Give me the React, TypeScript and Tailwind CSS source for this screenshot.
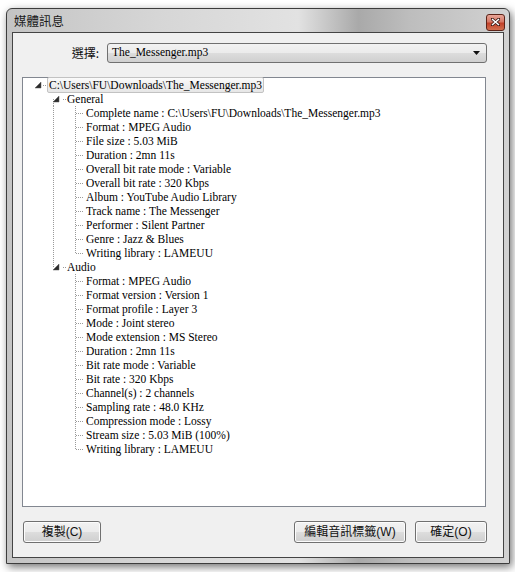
import React from 'react';

const generalItems = [
  'Complete name : C:\\Users\\FU\\Downloads\\The_Messenger.mp3',
  'Format : MPEG Audio',
  'File size : 5.03 MiB',
  'Duration : 2mn 11s',
  'Overall bit rate mode : Variable',
  'Overall bit rate : 320 Kbps',
  'Album : YouTube Audio Library',
  'Track name : The Messenger',
  'Performer : Silent Partner',
  'Genre : Jazz & Blues',
  'Writing library : LAMEUU',
];

const audioItems = [
  'Format : MPEG Audio',
  'Format version : Version 1',
  'Format profile : Layer 3',
  'Mode : Joint stereo',
  'Mode extension : MS Stereo',
  'Duration : 2mn 11s',
  'Bit rate mode : Variable',
  'Bit rate : 320 Kbps',
  'Channel(s) : 2 channels',
  'Sampling rate : 48.0 KHz',
  'Compression mode : Lossy',
  'Stream size : 5.03 MiB (100%)',
  'Writing library : LAMEUU',
];

const LINE = '#9a9a9a';

// dotted tree lines, drawn per row
const VLine = ({ x, y1, y2 }: { x: number; y1: number; y2: number }) => (
  <line x1={x + 0.5} x2={x + 0.5} y1={y1} y2={y2} stroke={LINE} strokeDasharray="1 1" shapeRendering="crispEdges" />
);
const HLine = ({ x1, x2 }: { x1: number; x2: number }) => (
  <line x1={x1} x2={x2} y1={7.5} y2={7.5} stroke={LINE} strokeDasharray="1 1" shapeRendering="crispEdges" />
);
const Expanded = ({ x }: { x: number }) => (
  <polygon points={`${x + 6},4 ${x + 6},10 ${x},10`} fill="#2b2b2b" stroke="#5a5a5a" strokeWidth="0.5" />
);

const Row = ({ width, lines, children }: { width: number; lines: React.ReactNode; children: React.ReactNode }) => (
  <div className="flex h-[14px] items-center whitespace-nowrap">
    <svg width={width} height={14} className="shrink-0">
      {lines}
    </svg>
    {children}
  </div>
);

const Leaf = ({ text, last, parentLast }: { text: string; last: boolean; parentLast: boolean }) => (
  <Row
    width={63}
    lines={
      <>
        {!parentLast && <VLine x={30} y1={0} y2={14} />}
        <VLine x={52} y1={0} y2={last ? 8 : 14} />
        <HLine x1={53} x2={61} />
      </>
    }
  >
    <span>{text}</span>
  </Row>
);

const Group = ({ title, items, last }: { title: string; items: string[]; last: boolean }) => (
  <>
    <Row
      width={44}
      lines={
        <>
          <VLine x={30} y1={last ? 0 : 7} y2={last ? 8 : 14} />
          <Expanded x={30} />
          <HLine x1={40} x2={43} />
        </>
      }
    >
      <span>{title}</span>
    </Row>
    {items.map((t, i) => (
      <Leaf key={title + i} text={t} last={i === items.length - 1} parentLast={last} />
    ))}
  </>
);

const WinButton = ({ label, className }: { label: string; className: string }) => (
  <button
    type="button"
    className={`h-[22px] rounded-[3px] border border-[#707070] bg-[linear-gradient(to_bottom,#f2f2f2_0%,#ebebeb_50%,#dddddd_50%,#cfcfcf_100%)] text-[12px] text-[#111] shadow-[inset_0_0_0_1px_#fcfcfc] ${className}`}
  >
    {label}
  </button>
);

export default function App() {
  return (
    <div className="h-[572px] w-[515px] bg-white pl-[6px] pt-[8px] font-['Liberation_Sans','Noto_Sans_CJK_TC',sans-serif]">
      <div className="flex h-[556px] w-[504px] flex-col rounded-t-[6px] border border-[#3c3c3c] bg-[linear-gradient(to_right,#c4c4c4,#d6d6d6_30%,#e2e2e2_58%,#a9a9a9_70%,#bdbdbd_80%,#d2d2d2)] px-[5px] pb-[5px] shadow-[2px_3px_8px_rgba(0,0,0,0.55)]">
        {/* title bar */}
        <div className="flex h-[23px] shrink-0 items-center justify-between">
          <span className="pl-[2px] pt-[2px] text-[12.5px] text-[#1a1a1a] font-['Noto_Sans_CJK_TC',sans-serif]">媒體訊息</span>
          <div className="mt-[3px] mr-[-1px] flex h-[17px] w-[19px] items-center justify-center rounded-[3px] border border-[#5c2318] bg-[linear-gradient(to_bottom,#e8a597_0%,#d67866_45%,#c2412a_55%,#d2704f_100%)]">
            <svg width="9" height="8" viewBox="0 0 9 8">
              <path d="M1 1 L8 7 M8 1 L1 7" stroke="#3a1a14" strokeWidth="3" strokeLinecap="square" />
              <path d="M1 1 L8 7 M8 1 L1 7" stroke="#ffffff" strokeWidth="1.6" />
            </svg>
          </div>
        </div>

        {/* client area */}
        <div className="flex flex-1 flex-col border border-[#444] bg-[#f0f0f0] pl-[9px] pr-[16px]">
          <div className="mt-[10px] flex items-center">
            <span className="w-[78px] pr-[1px] text-right text-[12px] text-[#111] font-['Noto_Sans_CJK_TC',sans-serif]">選擇:</span>
            <div className="ml-[7px] flex h-[20px] flex-1 items-center justify-between rounded-[3px] border border-[#707070] bg-[linear-gradient(to_bottom,#f2f2f2_0%,#ebebeb_50%,#dddddd_50%,#cfcfcf_100%)] pl-[4px] pr-[6px] font-['Liberation_Serif',serif] text-[11.5px] text-black">
              <span>The_Messenger.mp3</span>
              <svg width="7" height="4" viewBox="0 0 7 4">
                <polygon points="0,0 7,0 3.5,4" fill="#111" />
              </svg>
            </div>
          </div>

          <div className="mt-[14px] h-[430px] w-[464px] border border-[#828790] bg-white font-['Liberation_Serif',serif] text-[11.5px] leading-[14px] text-black">
            <Row
              width={24}
              lines={
                <>
                  <Expanded x={12} />
                  <HLine x1={20} x2={23} />
                </>
              }
            >
              <span className="rounded-[2px] border border-[#c2c2c2] bg-[linear-gradient(to_bottom,#fafafa,#e6e6e6)] px-[1px] leading-[14px]">
                C:\Users\FU\Downloads\The_Messenger.mp3
              </span>
            </Row>
            <Group title="General" items={generalItems} last={false} />
            <Group title="Audio" items={audioItems} last={true} />
          </div>

          <div className="mt-[14px] flex items-center font-['Liberation_Sans','Noto_Sans_CJK_TC',sans-serif]">
            <WinButton label="複製(C)" className="ml-[1px] w-[78px]" />
            <div className="flex-1" />
            <WinButton label="編輯音訊標籤(W)" className="w-[112px]" />
            <WinButton label="確定(O)" className="ml-[9px] w-[72px]" />
          </div>
        </div>
      </div>
    </div>
  );
}
